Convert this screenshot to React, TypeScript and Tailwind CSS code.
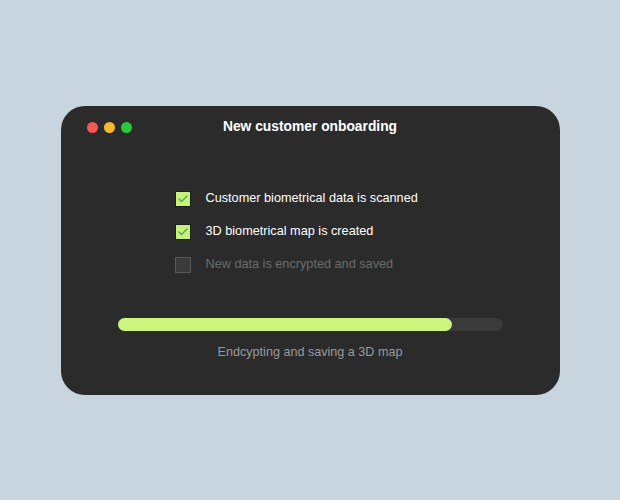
import { Check } from 'lucide-react';

const steps = [
  { label: 'Customer biometrical data is scanned', done: true },
  { label: '3D biometrical map is created', done: true },
  { label: 'New data is encrypted and saved', done: false },
];

export default function App() {
  const progress = 87;

  return (
    <div
      className="flex h-[500px] w-full items-center justify-center bg-[#c8d5df]"
      style={{ fontFamily: '"Liberation Sans", Arial, sans-serif' }}
    >
      <div className="flex h-[289px] w-[499px] flex-col rounded-[24px] bg-[#2b2b2b]">
        {/* Title bar */}
        <div className="grid h-[44px] grid-cols-[1fr_auto_1fr] items-center px-[26px]">
          <div className="flex items-center gap-[6px]">
            <span className="h-[11px] w-[11px] rounded-full bg-[#f25a55]" />
            <span className="h-[11px] w-[11px] rounded-full bg-[#f5b82c]" />
            <span className="h-[11px] w-[11px] rounded-full bg-[#28c840]" />
          </div>
          <h1 className="text-[13.8px] font-bold text-white">New customer onboarding</h1>
          <div />
        </div>

        {/* Steps */}
        <div className="mt-[33px] flex flex-col pl-[114px]">
          {steps.map((step) => (
            <div key={step.label} className="flex h-[33px] items-center gap-[15px]">
              {step.done ? (
                <span className="flex h-[16px] w-[16px] items-center justify-center border border-[#1e1e1e] bg-[#c6f27c]">
                  <Check className="h-[12px] w-[12px] text-[#5aa24a]" strokeWidth={2.6} />
                </span>
              ) : (
                <span className="h-[16px] w-[16px] border border-[#585858] bg-[#3a3a3a]" />
              )}
              <span className={`text-[12.7px] ${step.done ? 'text-white' : 'text-[#6c6c6c]'}`}>
                {step.label}
              </span>
            </div>
          ))}
        </div>

        {/* Progress */}
        <div className="mt-[36px] flex flex-col items-center">
          <div className="h-[13px] w-[385px] rounded-full bg-[#3a3a3a]">
            <div className="h-full rounded-full bg-[#cbf57d]" style={{ width: `${progress}%` }} />
          </div>
          <p className="mt-[12px] text-[12.6px] text-[#9a9a9a]">Endcypting and saving a 3D map</p>
        </div>
      </div>
    </div>
  );
}
